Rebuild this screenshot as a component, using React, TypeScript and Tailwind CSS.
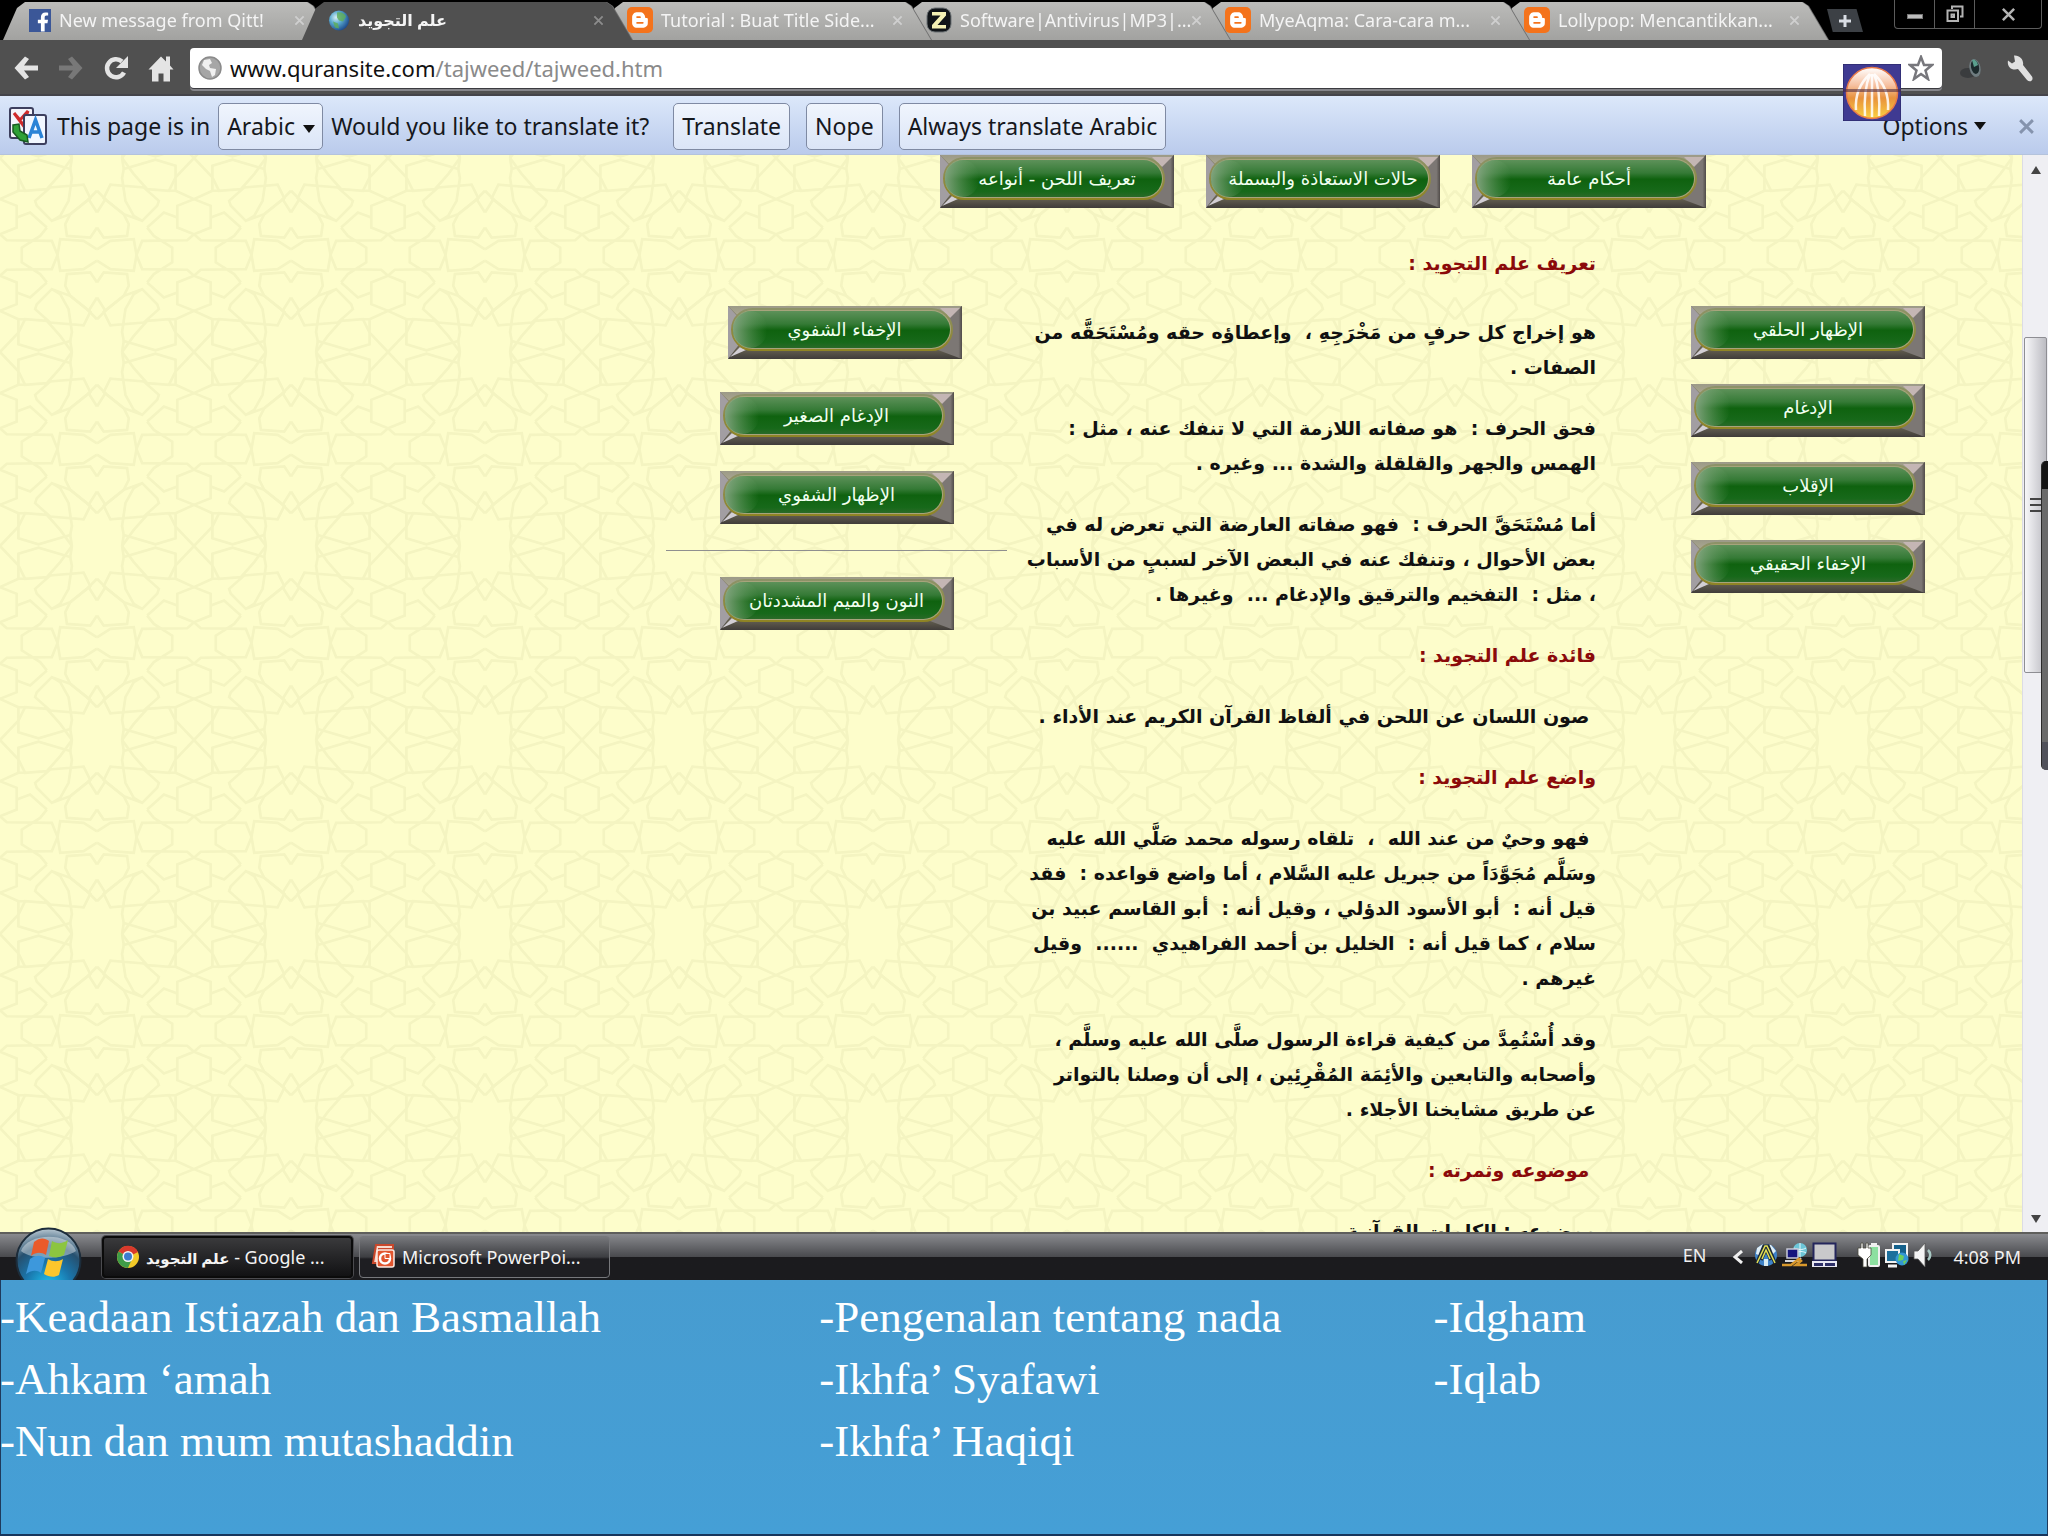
import type { ReactNode } from "react";
import { FaBloggerB, FaFacebookF } from "react-icons/fa";

const UI = "font-['Noto_Sans','DejaVu_Sans',sans-serif]";
const ARABIC = "font-['DejaVu_Sans',sans-serif]";

/* ---------- Favicons ---------- */

function FacebookIcon() {
  return (
    <span className="flex h-[23px] w-[22px] shrink-0 items-end justify-end bg-[#3b5798] pr-[2px]">
      <FaFacebookF className="h-[20px] w-[12px] text-white" />
    </span>
  );
}

function BloggerIcon() {
  return (
    <span className="flex h-[26px] w-[26px] shrink-0 items-center justify-center rounded-[5px] bg-[#f4731c]">
      <FaBloggerB className="h-[18px] w-[18px] text-white" />
    </span>
  );
}

function GlobeIcon() {
  return (
    <svg viewBox="0 0 22 22" className="h-[23px] w-[22px] shrink-0">
      <defs>
        <radialGradient id="globe" cx="0.35" cy="0.35" r="0.7">
          <stop offset="0" stopColor="#d7f0f4" />
          <stop offset="0.45" stopColor="#5aa9cf" />
          <stop offset="1" stopColor="#1c4a8c" />
        </radialGradient>
      </defs>
      <circle cx="11" cy="11" r="10" fill="url(#globe)" />
      <path d="M9 3c4-1 8 1 9 4l-3 5-4-1-2-3zM5 12l5 2 1 5-4-1z" fill="#5fae55" opacity="0.8" />
    </svg>
  );
}

function ZIcon() {
  return (
    <svg viewBox="0 0 26 26" className="h-[26px] w-[26px] shrink-0">
      <rect x="1" y="1" width="24" height="24" rx="8" fill="#101418" stroke="#6d7376" />
      <path d="M6 5h14v3.5L11.5 18H20v3.500H6V18l8.500-9.500H6z" fill="#f3f0b4" />
    </svg>
  );
}

/* ---------- Browser tabs ---------- */

type Tab = { title: string; icon: ReactNode; active?: boolean; z: string };

const tabs: Tab[] = [
  { title: "New message from Qitt!", icon: <FacebookIcon />, z: "z-10" },
  { title: "علم التجويد", icon: <GlobeIcon />, active: true, z: "z-20" },
  { title: "Tutorial : Buat Title Side...", icon: <BloggerIcon />, z: "z-[9]" },
  { title: "Software|Antivirus|MP3|...", icon: <ZIcon />, z: "z-[8]" },
  { title: "MyeAqma: Cara-cara m...", icon: <BloggerIcon />, z: "z-[7]" },
  { title: "Lollypop: Mencantikkan...", icon: <BloggerIcon />, z: "z-[6]" },
];

function CloseGlyph({ className }: { className: string }) {
  return (
    <svg viewBox="0 0 12 12" className={className}>
      <path d="M1.500 1.500l9 9M10.500 1.500l-9 9" stroke="currentColor" strokeWidth="2" fill="none" />
    </svg>
  );
}

function BrowserTab({ title, icon, active, z }: Tab) {
  return (
    <div className={`relative ${z} -mr-[31px] w-[330px] min-w-0 drop-shadow-[1px_0_0_#6f6f6f]`}>
      <div
        className={`flex h-10 items-center pr-[20px] pl-[26px] [clip-path:polygon(0_100%,14px_8px,22px_2px,calc(100%-26px)_2px,calc(100%-20px)_6px,100%_100%)] ${
          active ? "bg-[#505050]" : "bg-linear-to-b from-[#bdbdbb] to-[#a2a2a0]"
        }`}
      >
        <button type="button" className="flex min-w-0 flex-1 items-center gap-2 text-left">
          {icon}
          <span className={`${active ? "text-base font-bold" : "text-[18px]"} whitespace-nowrap text-[#f4f4f4]`}>{title}</span>
        </button>
        <button type="button" aria-label="Close tab" className="mr-1 flex h-5 w-5 items-center justify-center">
          <CloseGlyph className={`h-[11px] w-[11px] ${active ? "text-[#8c8c8c]" : "text-[#cfcfcf]"}`} />
        </button>
      </div>
    </div>
  );
}

function TabStrip() {
  return (
    <div className="flex h-10 items-start bg-black pr-[6px] pl-[3px]">
      {tabs.map((t) => (
        <BrowserTab key={t.title} {...t} />
      ))}
      <button
        type="button"
        aria-label="New tab"
        className="mt-[9px] ml-[30px] flex h-[23px] w-9 items-center justify-center bg-[#3c4045] [clip-path:polygon(0_0,82%_0,100%_100%,16%_100%)]"
      >
        <svg viewBox="0 0 14 14" className="h-[14px] w-[14px]">
          <path d="M7 1v12M1 7h12" stroke="#d9dde4" strokeWidth="3" />
        </svg>
      </button>
      <div className="ml-auto flex h-[29px] divide-x divide-[#5c5c5c] rounded-b-[4px] border-x border-b border-[#5c5c5c]">
        <button type="button" aria-label="Minimize" className="flex w-10 items-center justify-center">
          <span className="mt-1 h-[5px] w-[16px] border border-[#777] bg-[#bdbdbd]" />
        </button>
        <button type="button" aria-label="Restore" className="flex w-10 items-center justify-center">
          <svg viewBox="0 0 18 18" className="h-[18px] w-[18px]" fill="none" stroke="#b4b4b4" strokeWidth="2">
            <path d="M6 4V1.500h10.500v10H14" />
            <path d="M1.500 5.500h10.500v10.500H1.500zM5.500 9.500h2.500v2.500H5.500z" />
          </svg>
        </button>
        <button type="button" aria-label="Close" className="flex w-[66px] items-center justify-center">
          <CloseGlyph className="h-[15px] w-[15px] text-[#b4b4b4]" />
        </button>
      </div>
    </div>
  );
}

/* ---------- Toolbar ---------- */

function Toolbar() {
  return (
    <div className="relative z-10 flex h-14 items-center bg-[#505050] pr-[13px] pl-[13px] shadow-[inset_0_-2px_0_#44444a]">
      <div className="flex w-[177px] items-center gap-[19px]">
        <button type="button" aria-label="Back">
          <svg viewBox="0 0 26 26" className="h-[26px] w-[26px]">
            <path d="M25 10.500H11l5-6.500-4-2.500L1.500 13 12 24.500l4-2.500-5-6.500h14z" fill="#e4e4e4" />
          </svg>
        </button>
        <button type="button" aria-label="Forward">
          <svg viewBox="0 0 26 26" className="h-[26px] w-[26px]">
            <path d="M1 10.500h14l-5-6.500 4-2.500L24.500 13 14 24.500 10 22l5-6.500H1z" fill="#787878" />
          </svg>
        </button>
        <button type="button" aria-label="Reload">
          <svg viewBox="0 0 26 26" className="h-[26px] w-[26px]">
            <path d="M21 17.500A9 9 0 1 1 19 6.500" fill="none" stroke="#e4e4e4" strokeWidth="4.500" />
            <path d="M25 1v12H13z" fill="#e4e4e4" />
          </svg>
        </button>
        <button type="button" aria-label="Home">
          <svg viewBox="0 0 26 26" className="h-[27px] w-[26px]">
            <path d="M13 1l5 5V1h4v9l3.500 4H22v12h-6.500v-8h-5v8H4V14H.5z" fill="#e4e4e4" />
          </svg>
        </button>
      </div>
      <div className="relative flex h-10 flex-1 items-center rounded-[4px] bg-white pr-2 pl-2 shadow-[0_1px_0_#3b3b40,0_3px_0_#85858a]">
        <svg viewBox="0 0 24 24" className="h-6 w-6 shrink-0">
          <circle cx="12" cy="12" r="11" fill="#a6a6a6" stroke="#8a8a8a" strokeWidth="1.500" />
          <path d="M6 4l6-1 2 4-3 2 1 3 6 1-1 6-3 2-2-6-4-2-4-4z" fill="#f0f0f0" />
        </svg>
        <div className="pointer-events-none absolute left-10 text-[22px] whitespace-nowrap" aria-hidden="true">
          <span className="text-[#111]">www.quransite.com</span>
          <span className="text-[#8a8a8a]">/tajweed/tajweed.htm</span>
        </div>
        <input
          aria-label="Address"
          defaultValue="www.quransite.com/tajweed/tajweed.htm"
          className="ml-2 min-w-0 flex-1 bg-transparent text-[22px] text-transparent outline-none"
        />
        <button type="button" aria-label="Bookmark this page">
          <svg viewBox="0 0 26 26" className="h-[26px] w-[26px]">
            <path
              d="M13 2l3 8h8l-6.500 5.500 2.500 8.500-7-5-7 5 2.500-8.500L2 10h8z"
              fill="#fff"
              stroke="#77777c"
              strokeWidth="2.500"
            />
          </svg>
        </button>
      </div>
      <button type="button" aria-label="Extension" className="ml-[17px]">
        <svg viewBox="0 0 26 26" className="h-[26px] w-[26px]">
          <ellipse cx="9" cy="18" rx="8" ry="5" fill="#3a3c3e" />
          <ellipse cx="16" cy="13" rx="5.500" ry="9" fill="#6f7c80" transform="rotate(-12 16 13)" />
          <ellipse cx="16" cy="12" rx="4" ry="7" fill="#1c2a2c" transform="rotate(-12 16 12)" />
          <path d="M13 5c3-1 5 1 6 5l-4 2z" fill="#5aa08e" />
        </svg>
      </button>
      <button type="button" aria-label="Settings" className="ml-[22px]">
        <svg viewBox="0 0 28 28" className="h-7 w-7">
          <path
            d="M7 1.500l1 6-3 2-4-3c-1 5 2 9 7 9l3-.5 9 11c3 3 7 0 5-3.500L16 11c1-5-3-10-9-9.500z"
            fill="#e0e0e0"
          />
        </svg>
      </button>
      <svg viewBox="0 0 58 57" className="pointer-events-none absolute top-6 right-[147px] h-[57px] w-[58px]">
        <defs>
          <linearGradient id="ball" x1="0" y1="0" x2="0" y2="1">
            <stop offset="0" stopColor="#ffffff" />
            <stop offset="0.35" stopColor="#f6c0a0" />
            <stop offset="0.6" stopColor="#e8923c" />
            <stop offset="1" stopColor="#fbd040" />
          </linearGradient>
        </defs>
        <rect width="58" height="57" fill="#3f3a92" stroke="#26245c" />
        <circle cx="29" cy="29" r="25.500" fill="url(#ball)" stroke="#e77a4a" strokeWidth="1.500" />
        <g fill="none" stroke="#fff" strokeWidth="2.500" opacity="0.85">
          <path d="M27 10C16 20 12 32 13 46M27 10c-5 12-6 26-5 42M29 10v43M31 10c5 12 6 26 5 42M31 10c11 10 15 22 14 36" />
        </g>
        <path d="M0 25h58v3H0z" fill="#502c40" opacity="0.6" />
      </svg>
    </div>
  );
}

/* ---------- Translate bar ---------- */

const barButton =
  "flex h-[47px] items-center rounded-[5px] border border-[#7f8aa3] bg-linear-to-b from-[#f0f5fd] to-[#dbe5f7] px-[8px] whitespace-nowrap";

function Caret() {
  return (
    <svg viewBox="0 0 12 8" className="ml-[6px] h-2 w-3">
      <path d="M0 0h12L6 8z" fill="#111" />
    </svg>
  );
}

function TranslateBar() {
  return (
    <div className="relative z-10 flex h-[59px] items-center border-b border-[#b4c3dc] bg-linear-to-b from-[#dce8fa] to-[#bacbec] pt-[2px] pr-[13px] pl-[9px] text-[23px] text-[#16181d]">
      <svg viewBox="0 0 38 38" className="h-[38px] w-[38px]">
        <rect x="1" y="1" width="23" height="30" rx="2" fill="#f4f4fa" stroke="#3d3f5e" strokeWidth="2" />
        <path d="M5 6l6 7 8-9-5 14z" fill="none" stroke="#d02b2b" strokeWidth="3" />
        <rect x="15" y="8" width="22" height="29" rx="2" fill="#f2f7ff" stroke="#3d3f5e" strokeWidth="2" />
        <path d="M20 31l6.500-18L33 31M22.500 25h8" fill="none" stroke="#2b83d6" strokeWidth="3.500" />
        <path d="M4 18l6-1 1 7 7 4 1 7-8-2-7-8z" fill="#2fa136" stroke="#185c20" strokeWidth="1.500" />
      </svg>
      <label htmlFor="page-language" className="ml-[10px] whitespace-nowrap">
        This page is in
      </label>
      <div className="relative ml-2">
        <select id="page-language" defaultValue="Arabic" className={`${barButton} w-[105px] appearance-none`}>
          <option>Arabic</option>
        </select>
        <span className="pointer-events-none absolute top-[22px] right-2">
          <Caret />
        </span>
      </div>
      <span className="ml-2 w-[318px] whitespace-nowrap">Would you like to translate it?</span>
      <div className="ml-6 flex gap-4">
        <button type="button" className={barButton}>
          Translate
        </button>
        <button type="button" className={barButton}>
          Nope
        </button>
        <button type="button" className={barButton}>
          Always translate Arabic
        </button>
      </div>
      <button type="button" className="ml-auto flex items-center">
        Options
        <Caret />
      </button>
      <button type="button" aria-label="Dismiss" className="ml-8">
        <CloseGlyph className="h-[17px] w-[17px] text-[#8593ad]" />
      </button>
    </div>
  );
}

/* ---------- Web page ---------- */

function PatternQuarter({ transform }: { transform?: string }) {
  return (
    <g transform={transform}>
      <g transform="scale(0.3344)">
        <path d="M75 0L110 48L150 93L215 98L235 58L235 23L175 5L80 33L75 60L85 128L110 173L135 188L180 143L185 128L140 88L40 80L20 120L80 168L135 188" />
        <path d="M0 98L25 123L0 163M0 208L20 238L90 233L95 198L80 168L20 120" />
        <path d="M0 273L40 248L110 243L118 290L135 248L270 246L290 228M150 208L200 163L240 178M150 208L170 233L225 268L225 290" />
        <path d="M290 0L235 58M235 98L290 123L240 143L240 208L290 228M235 58L235 98L215 98M75 0L80 33" />
      </g>
    </g>
  );
}

function StarPattern() {
  return (
    <svg className="absolute inset-0 h-full w-full" aria-hidden="true">
      <defs>
        <pattern id="stars" x="97" y="3" width="194" height="194" patternUnits="userSpaceOnUse">
          <g fill="none" stroke="#f4f4c1" strokeWidth="8">
            <PatternQuarter />
            <PatternQuarter transform="translate(194 0) scale(-1 1)" />
            <PatternQuarter transform="translate(0 194) scale(1 -1)" />
            <PatternQuarter transform="translate(194 194) scale(-1 -1)" />
          </g>
        </pattern>
      </defs>
      <rect width="100%" height="100%" fill="url(#stars)" />
    </svg>
  );
}

function GreenDefs() {
  return (
    <svg className="absolute h-0 w-0" aria-hidden="true">
      <defs>
        <linearGradient id="green" x1="0" y1="0" x2="0" y2="1">
          <stop offset="0" stopColor="#5d9159" />
          <stop offset="0.35" stopColor="#357a36" />
          <stop offset="0.52" stopColor="#0f620f" />
          <stop offset="0.85" stopColor="#17691a" />
          <stop offset="1" stopColor="#2a6a28" />
        </linearGradient>
        <linearGradient id="shine" x1="0" y1="0" x2="1" y2="0">
          <stop offset="0" stopColor="#8aa886" stopOpacity="0.9" />
          <stop offset="1" stopColor="#5f9a5c" stopOpacity="0" />
        </linearGradient>
        <linearGradient id="rim" x1="0" y1="0" x2="0" y2="1">
          <stop offset="0" stopColor="#8d9268" />
          <stop offset="1" stopColor="#8f8424" />
        </linearGradient>
        <linearGradient id="metalTop" x1="0" y1="0" x2="0" y2="1">
          <stop offset="0" stopColor="#9c9a88" />
          <stop offset="1" stopColor="#b9b596" />
        </linearGradient>
        <linearGradient id="metalBottom" x1="0" y1="0" x2="0" y2="1">
          <stop offset="0.7" stopColor="#7b765e" />
          <stop offset="1" stopColor="#403c3a" />
        </linearGradient>
        <linearGradient id="metalRight" x1="0" y1="0" x2="1" y2="0">
          <stop offset="0.85" stopColor="#7c7774" />
          <stop offset="1" stopColor="#514c49" />
        </linearGradient>
      </defs>
    </svg>
  );
}

function GreenButton({ children, className = "" }: { children: string; className?: string }) {
  return (
    <button type="button" className={`relative flex h-[53px] w-[234px] shrink-0 justify-center ${className}`}>
      <svg viewBox="0 0 234 53" className="absolute inset-0 h-full w-full" aria-hidden="true">
        <rect width="234" height="53" fill="url(#metalBottom)" />
        <path d="M0 0h234L212 20H20z" fill="url(#metalTop)" />
        <path d="M0 0l22 24L0 53z" fill="#a29ea2" />
        <path d="M234 0v53l-24-9V22z" fill="url(#metalRight)" />
        <path d="M212 2h20l-10 10z" fill="#c4b6b4" />
        <path d="M2 51l10-10 6 3z" fill="#d2ced4" />
        <rect x="4" y="3" width="220" height="41" rx="20.500" fill="#a7a47c" stroke="url(#rim)" strokeWidth="2" />
        <rect x="5" y="5" width="217" height="37" rx="18.500" fill="url(#green)" />
        <rect x="5" y="5" width="34" height="37" rx="17" fill="url(#shine)" />
      </svg>
      <span dir="rtl" className={`relative ${ARABIC} text-[18px] leading-[47px] whitespace-nowrap text-[#f1fff0]`}>
        {children}
      </span>
    </button>
  );
}

type Block = { heading?: boolean; lines: string[] };

const N = "\u00a0";

const article: Block[] = [
  { lines: [`هو إخراج كل حرفٍ من مَخْرَجِهِ ،${N} وإعطاؤه حقه ومُسْتَحَقَّه من`, "الصفات ."] },
  { lines: [`فحق الحرف :${N} هو صفاته اللازمة التي لا تنفك عنه ، مثل :`, "الهمس والجهر والقلقلة والشدة ... وغيره ."] },
  {
    lines: [
      `أما مُسْتَحَقَّ الحرف :${N} فهو صفاته العارضة التي تعرض له في`,
      "بعض الأحوال ، وتنفك عنه في البعض الآخر لسببٍ من الأسباب",
      `، مثل :${N} التفخيم والترقيق والإدغام ...${N} وغيرها .`,
    ],
  },
  { heading: true, lines: ["فائدة علم التجويد :"] },
  { lines: [`${N}صون اللسان عن اللحن في ألفاظ القرآن الكريم عند الأداء .`] },
  { heading: true, lines: ["واضع علم التجويد :"] },
  {
    lines: [
      `${N}فهو وحيٌ من عند الله${N} ،${N} تلقاه رسوله محمد صَلَّي الله عليه`,
      `وسَلَّم مُجَوَّدَاً من جبريل عليه السَّلام ، أما واضع قواعده :${N} فقد`,
      `قيل أنه :${N} أبو الأسود الدؤلي ، وقيل أنه :${N} أبو القاسم عبيد بن`,
      `سلام ، كما قيل أنه :${N} الخليل بن أحمد الفراهيدي${N} ......${N} وقيل`,
      "غيرهم .",
    ],
  },
  {
    lines: [
      "وقد أُسْتُمِدَّ من كيفية قراءة الرسول صلَّى الله عليه وسلَّم ،",
      "وأصحابه والتابعين والأئِمَة المُقْرِئِين ، إلى أن وصلنا بالتواتر",
      "عن طريق مشايخنا الأجلاء .",
    ],
  },
  { heading: true, lines: [`${N}موضوعه وثمرته :`] },
  { lines: ["موضوعه : الكلمات القرآنية"] },
];

function Lines({ lines }: { lines: string[] }) {
  return (
    <>
      {lines.map((l) => (
        <span key={l} className="block whitespace-nowrap">
          {l}
        </span>
      ))}
    </>
  );
}

function WebPage() {
  return (
    <main className="relative min-w-0 flex-1 overflow-hidden bg-[#fdfdcb]">
      <StarPattern />
      <GreenDefs />
      <div className="relative">
        <nav className="flex justify-end gap-8 pr-[316px]">
          <GreenButton>تعريف اللحن - أنواعه</GreenButton>
          <GreenButton>حالات الاستعاذة والبسملة</GreenButton>
          <GreenButton>أحكام عامة</GreenButton>
        </nav>
        <div className="flex items-start justify-end pr-[97px]">
          <nav className="mt-[98px] flex w-[341px] flex-col items-center">
            <GreenButton className="ml-4">الإخفاء الشفوي</GreenButton>
            <GreenButton className="mt-[33px]">الإدغام الصغير</GreenButton>
            <GreenButton className="mt-[26px]">الإظهار الشفوي</GreenButton>
            <hr className="my-[26px] w-full border-t border-[#8f8f8f]" />
            <GreenButton>النون والميم المشددتان</GreenButton>
          </nav>
          <article
            dir="rtl"
            className={`mt-[38px] ml-[10px] flex w-[579px] flex-col gap-[26px] ${ARABIC} text-[19px] leading-[35px] font-bold text-[#111]`}
          >
            <h2 className="mb-2 text-[#8b0a0a]">تعريف علم التجويد :</h2>
            {article.map((b) =>
              b.heading ? (
                <h2 key={b.lines[0]} className="text-[#8b0a0a]">
                  <Lines lines={b.lines} />
                </h2>
              ) : (
                <p key={b.lines[0]}>
                  <Lines lines={b.lines} />
                </p>
              ),
            )}
          </article>
          <nav className="mt-[98px] ml-[95px] flex flex-col gap-[25px]">
            <GreenButton>الإظهار الحلقي</GreenButton>
            <GreenButton>الإدغام</GreenButton>
            <GreenButton>الإقلاب</GreenButton>
            <GreenButton>الإخفاء الحقيقي</GreenButton>
          </nav>
        </div>
      </div>
    </main>
  );
}

function Scrollbar() {
  return (
    <div className="relative flex w-[26px] shrink-0 flex-col items-center border-l border-[#dcdce4] bg-[#efeff3]">
      <svg viewBox="0 0 10 8" className="mt-[11px] h-2 w-[10px]">
        <path d="M0 8h10L5 0z" fill="#444" />
      </svg>
      <div className="mt-[163px] flex h-[336px] w-[23px] items-center justify-center rounded-[2px] border border-[#8e8e93] bg-linear-to-r from-[#f7f7f9] to-[#bcbcc2]">
        <span className="h-[14px] w-[11px] border-y-2 border-[#444] py-1">
          <span className="block h-[2px] bg-[#444]" />
        </span>
      </div>
      <svg viewBox="0 0 10 8" className="mt-auto mb-[9px] h-2 w-[10px]">
        <path d="M0 0h10L5 8z" fill="#444" />
      </svg>
      <div className="absolute top-[306px] right-0 flex h-[309px] w-[7px] flex-col overflow-hidden rounded-l-[5px] border-l border-[#2a2a2a] bg-[#6a6a6a]">
        <span className="h-7 bg-[#141414]" />
        <span className="mt-auto h-7 bg-[#50515a]" />
      </div>
    </div>
  );
}

/* ---------- Taskbar ---------- */

function StartOrb() {
  return (
    <button type="button" aria-label="Start" className="absolute top-[-7px] left-[15px] h-[53px] w-[67px] overflow-hidden">
      <svg viewBox="0 0 67 67" className="h-[67px] w-[67px]">
        <defs>
          <radialGradient id="orb" cx="0.5" cy="0.9" r="0.9">
            <stop offset="0" stopColor="#1fc4f2" />
            <stop offset="0.4" stopColor="#1a76ac" />
            <stop offset="0.7" stopColor="#26506f" />
            <stop offset="1" stopColor="#b9c8d2" />
          </radialGradient>
        </defs>
        <circle cx="33.500" cy="33.500" r="32" fill="url(#orb)" stroke="#1c2c3a" strokeWidth="2" />
        <path d="M6 24C12 6 54 4 61 24 50 32 18 34 6 24z" fill="#fff" opacity="0.4" />
        <g transform="translate(0 -3)">
          <path d="M19 18c6-5 11-4 15-1l-3 14c-5-3-10-3-15 1z" fill="#ea5a2a" />
          <path d="M37 17c5 3 10 3 16-1l-4 15c-5 3-10 3-15 1z" fill="#8cc540" />
          <path d="M15 35c6-4 11-4 15-1l-4 15c-4-3-9-3-15 1z" fill="#3d98dc" />
          <path d="M33 35c5 3 10 3 15 0l-4 16c-5 3-10 2-15-1z" fill="#fcc62c" />
        </g>
      </svg>
    </button>
  );
}

function ChromeIcon() {
  return (
    <svg viewBox="0 0 24 24" className="h-6 w-6 shrink-0">
      <circle cx="12" cy="12" r="11" fill="#f2c928" />
      <path d="M12 12L2.500 6.500A11 11 0 0 1 22 7z" fill="#d8392c" />
      <path d="M12 12L2.500 6.500A11 11 0 0 0 12 23l4-9z" fill="#3f9c48" />
      <circle cx="12" cy="11.500" r="5.500" fill="#f4f4f4" />
      <circle cx="12" cy="11.500" r="4" fill="#3d7ccf" />
    </svg>
  );
}

function PowerPointIcon() {
  return (
    <svg viewBox="0 0 26 26" className="h-[26px] w-[26px] shrink-0">
      <path d="M6 1h17v4H9v14H3z" fill="#f7d9cd" stroke="#c9472b" strokeWidth="2" />
      <rect x="7" y="6" width="17" height="17" rx="2" fill="#e2552f" stroke="#fbe9e2" strokeWidth="1.500" />
      <circle cx="15" cy="14.500" r="5" fill="none" stroke="#fff" strokeWidth="2.500" />
      <path d="M15 14.500V9.500h5v5z" fill="#e2552f" stroke="#fff" />
    </svg>
  );
}

function Tray() {
  return (
    <div className="ml-auto flex items-center pb-[4px] text-[18px] text-[#f0f0f0]">
      <button type="button">EN</button>
      <button type="button" aria-label="Show hidden icons" className="mt-1 ml-[26px]">
        <svg viewBox="0 0 12 14" className="h-[14px] w-3">
          <path d="M10 1L3 7l7 6" fill="none" stroke="#f0f0f0" strokeWidth="3" />
        </svg>
      </button>
      <svg viewBox="0 0 24 24" className="ml-[10px] h-6 w-6">
        <circle cx="12" cy="12" r="11" fill="#3f83c8" />
        <path d="M3 5l6-4 8 1 5 6-4 4-6-7-5 8-5-2z" fill="#dfeef6" />
        <path d="M3 20L10 3h4l7 17M7 17l5-11 5 11" fill="none" stroke="#1d2a38" strokeWidth="3.500" />
        <path d="M3 20L11 3h2l8 17M8 16l4-9 4 9" fill="none" stroke="#e3df52" strokeWidth="1.500" />
        <path d="M10 23v-7h4v7z" fill="#d8ecf4" />
      </svg>
      <svg viewBox="0 0 26 26" className="ml-[4px] h-[26px] w-[26px]">
        <circle cx="18" cy="8" r="7" fill="#6cc6d8" />
        <path d="M12 6c4 2 9 2 12 0M13 11c4-2 8-2 11 0M18 1v14" stroke="#e6f7fb" fill="none" />
        <rect x="5" y="7" width="11" height="9" fill="#15167e" stroke="#c7cad8" strokeWidth="1.500" />
        <path d="M3 19h13l3-3" stroke="#d7d7da" strokeWidth="2" fill="none" />
        <path d="M0 23h9l8-6 2 2-5 4h11" stroke="#d8982c" strokeWidth="2.500" fill="none" />
      </svg>
      <svg viewBox="0 0 26 26" className="ml-[4px] h-[26px] w-[26px]">
        <rect x="1.500" y="1.500" width="22" height="17" fill="#c9c9cb" stroke="#24265c" strokeWidth="2" />
        <path d="M0 19h25v6H0z" fill="#e8e8f2" />
        <path d="M2 21h9v3H2zM13 21h10v3H13z" fill="#2c2e66" />
      </svg>
      <svg viewBox="0 0 24 26" className="ml-[19px] h-[26px] w-6">
        <rect x="12" y="4" width="10" height="20" rx="1" fill="#8ce0a0" stroke="#f0f0f0" strokeWidth="2" />
        <path d="M14 1h6v3h-6z" fill="#f0f0f0" />
        <path d="M4 1h2v5h3V1h2v5h3v7l-4 4v8H6v-8l-5-4V6h3z" fill="#fff" stroke="#4a4a3c" strokeWidth="0.800" />
      </svg>
      <svg viewBox="0 0 24 26" className="ml-[4px] h-[26px] w-6">
        <rect x="8" y="2" width="14" height="13" fill="#14618c" stroke="#f2f2f2" strokeWidth="2" />
        <rect x="1" y="8" width="13" height="12" fill="#1c6f9c" stroke="#f2f2f2" strokeWidth="2" />
        <path d="M3 24h9" stroke="#f2f2f2" strokeWidth="3" />
        <circle cx="17" cy="17" r="6.500" fill="#3397d4" />
        <path d="M14 12l5 2-1 4-5 1zM18 19l4-1-3 5z" fill="#6ccf60" />
      </svg>
      <svg viewBox="0 0 20 26" className="ml-[4px] h-[26px] w-5">
        <path d="M1 9h4l7-8v24l-7-8H1z" fill="#f4f4f4" stroke="#555" strokeWidth="0.800" />
        <path d="M15 8c3 3 3 7 0 10" fill="none" stroke="#a9c9c4" strokeWidth="2.500" />
      </svg>
      <time className="mt-1 ml-[20px]">4:08 PM</time>
    </div>
  );
}

function Taskbar() {
  return (
    <footer className="relative flex h-12 shrink-0 items-center border-t-2 border-[#5f5f5c] bg-linear-to-b from-[#8a8b8f] from-0% via-[#4a4b4f] via-49% to-[#1b1b1e] to-50% pr-[27px] pl-[102px]">
      <StartOrb />
      <div className="flex gap-[6px] text-[18px] text-[#f4f4f4]">
        <button
          type="button"
          className="flex h-[42px] w-[251px] items-center gap-[6px] rounded-[4px] border-2 border-[#0b0b0b] bg-linear-to-b from-[#3a3a3c] to-[#121214] px-3 whitespace-nowrap shadow-[0_0_0_1px_#4b4b4f]"
        >
          <ChromeIcon />
          <span>
            <bdi className="text-[15px] font-bold">علم التجويد</bdi> - Google ...
          </span>
        </button>
        <button
          type="button"
          className="flex h-[42px] w-[251px] items-center gap-[6px] rounded-[4px] border border-[#77787c] bg-linear-to-b from-[#77787c] from-0% via-[#3d3e42] via-50% to-[#1e1e22] to-55% px-[10px] whitespace-nowrap"
        >
          <PowerPointIcon />
          <span>Microsoft PowerPoi...</span>
        </button>
      </div>
      <Tray />
    </footer>
  );
}

/* ---------- Slide notes ---------- */

const columns = [
  ["-Keadaan Istiazah dan Basmallah", "-Ahkam ‘amah", "-Nun dan mum mutashaddin"],
  ["-Pengenalan tentang nada", "-Ikhfa’ Syafawi", "-Ikhfa’ Haqiqi"],
  ["-Idgham", "-Iqlab"],
];

function SlideNotes() {
  return (
    <section className="grid shrink-0 grid-cols-[4fr_3fr_3fr] border-b-2 border-[#17355c] bg-linear-to-b from-[#479cd0] to-[#459fd6] pt-[6px] pb-[62px] font-['Liberation_Serif',serif] text-[45px] leading-[62px] text-white shadow-[inset_1px_0_0_#1f3a5c,inset_-1px_0_0_#1f3a5c]">
      {columns.map((items) => (
        <ul key={items[0]}>
          {items.map((item) => (
            <li key={item} className="whitespace-nowrap">
              {item}
            </li>
          ))}
        </ul>
      ))}
    </section>
  );
}

export default function App() {
  return (
    <div className={`flex h-screen flex-col overflow-hidden bg-black ${UI}`}>
      <header className="relative z-10 shrink-0">
        <TabStrip />
        <div className="flex flex-col-reverse">
          <TranslateBar />
          <Toolbar />
        </div>
      </header>
      <div className="flex min-h-0 flex-1">
        <WebPage />
        <Scrollbar />
      </div>
      <Taskbar />
      <SlideNotes />
    </div>
  );
}
